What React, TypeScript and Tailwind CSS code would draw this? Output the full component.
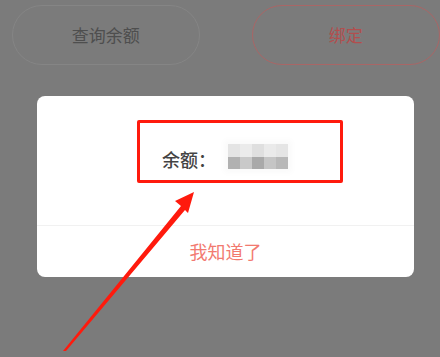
import React from "react";

const font = { fontFamily: '"Noto Sans CJK SC", "Noto Sans", sans-serif' };

const topRow = ["#e4e4e4", "#ebebeb", "#dfdfdf", "#eaeaea", "#e5e5e5"];
const bottomRow = ["#b1b1b1", "#c9c9c9", "#a9a9a9", "#c5c5c5", "#b8b8b8"];

export default function App() {
  return (
    <div className="relative w-[440px] h-[357px] overflow-hidden bg-[#7b7b7b]" style={font}>
      <div className="flex gap-[52px] pl-[12px] pt-[5px]">
        <div className="w-[188px] h-[60px] rounded-full border border-[#858585] flex items-center justify-center text-[17px] text-[#4e4e4e]">
          查询余额
        </div>
        <div className="w-[189px] h-[60px] rounded-full border border-[#a96666] flex items-center justify-center text-[17px] text-[#b24e4e]">
          绑定
        </div>
      </div>

      <div className="ml-[37px] mt-[31px] w-[377px] h-[181px] bg-white rounded-[8px] flex flex-col">
        <div className="h-[129px] pt-[24px] pl-[100px]">
          <div className="w-[206px] h-[63px] border-[3px] border-[#ff1a0d] rounded-[2px] flex items-end pb-[10px] pl-[22px]">
            <span className="text-[18px] leading-[22px] font-medium text-[#444]">余额：</span>
            <div className="ml-[12px] mb-[1px] grid grid-cols-5 w-[60px] h-[25px] shadow-[0_0_6px_4px_#fafafa] bg-[#fafafa]">
              {topRow.map((c, i) => (
                <div key={"t" + i} style={{ backgroundColor: c }} />
              ))}
              {bottomRow.map((c, i) => (
                <div key={"b" + i} style={{ backgroundColor: c }} />
              ))}
            </div>
          </div>
        </div>
        <div className="h-px bg-[#f1f1f1]" />
        <div className="flex-1 flex items-center justify-center text-[18px] text-[#f27a70]">
          我知道了
        </div>
      </div>

      <svg className="absolute left-0 top-0" width="440" height="357" viewBox="0 0 440 357">
        <polygon
          points="194,192 175,201 181,206 63,351 66,351 185,210 188,213"
          fill="#ff1a0d"
        />
      </svg>
    </div>
  );
}
